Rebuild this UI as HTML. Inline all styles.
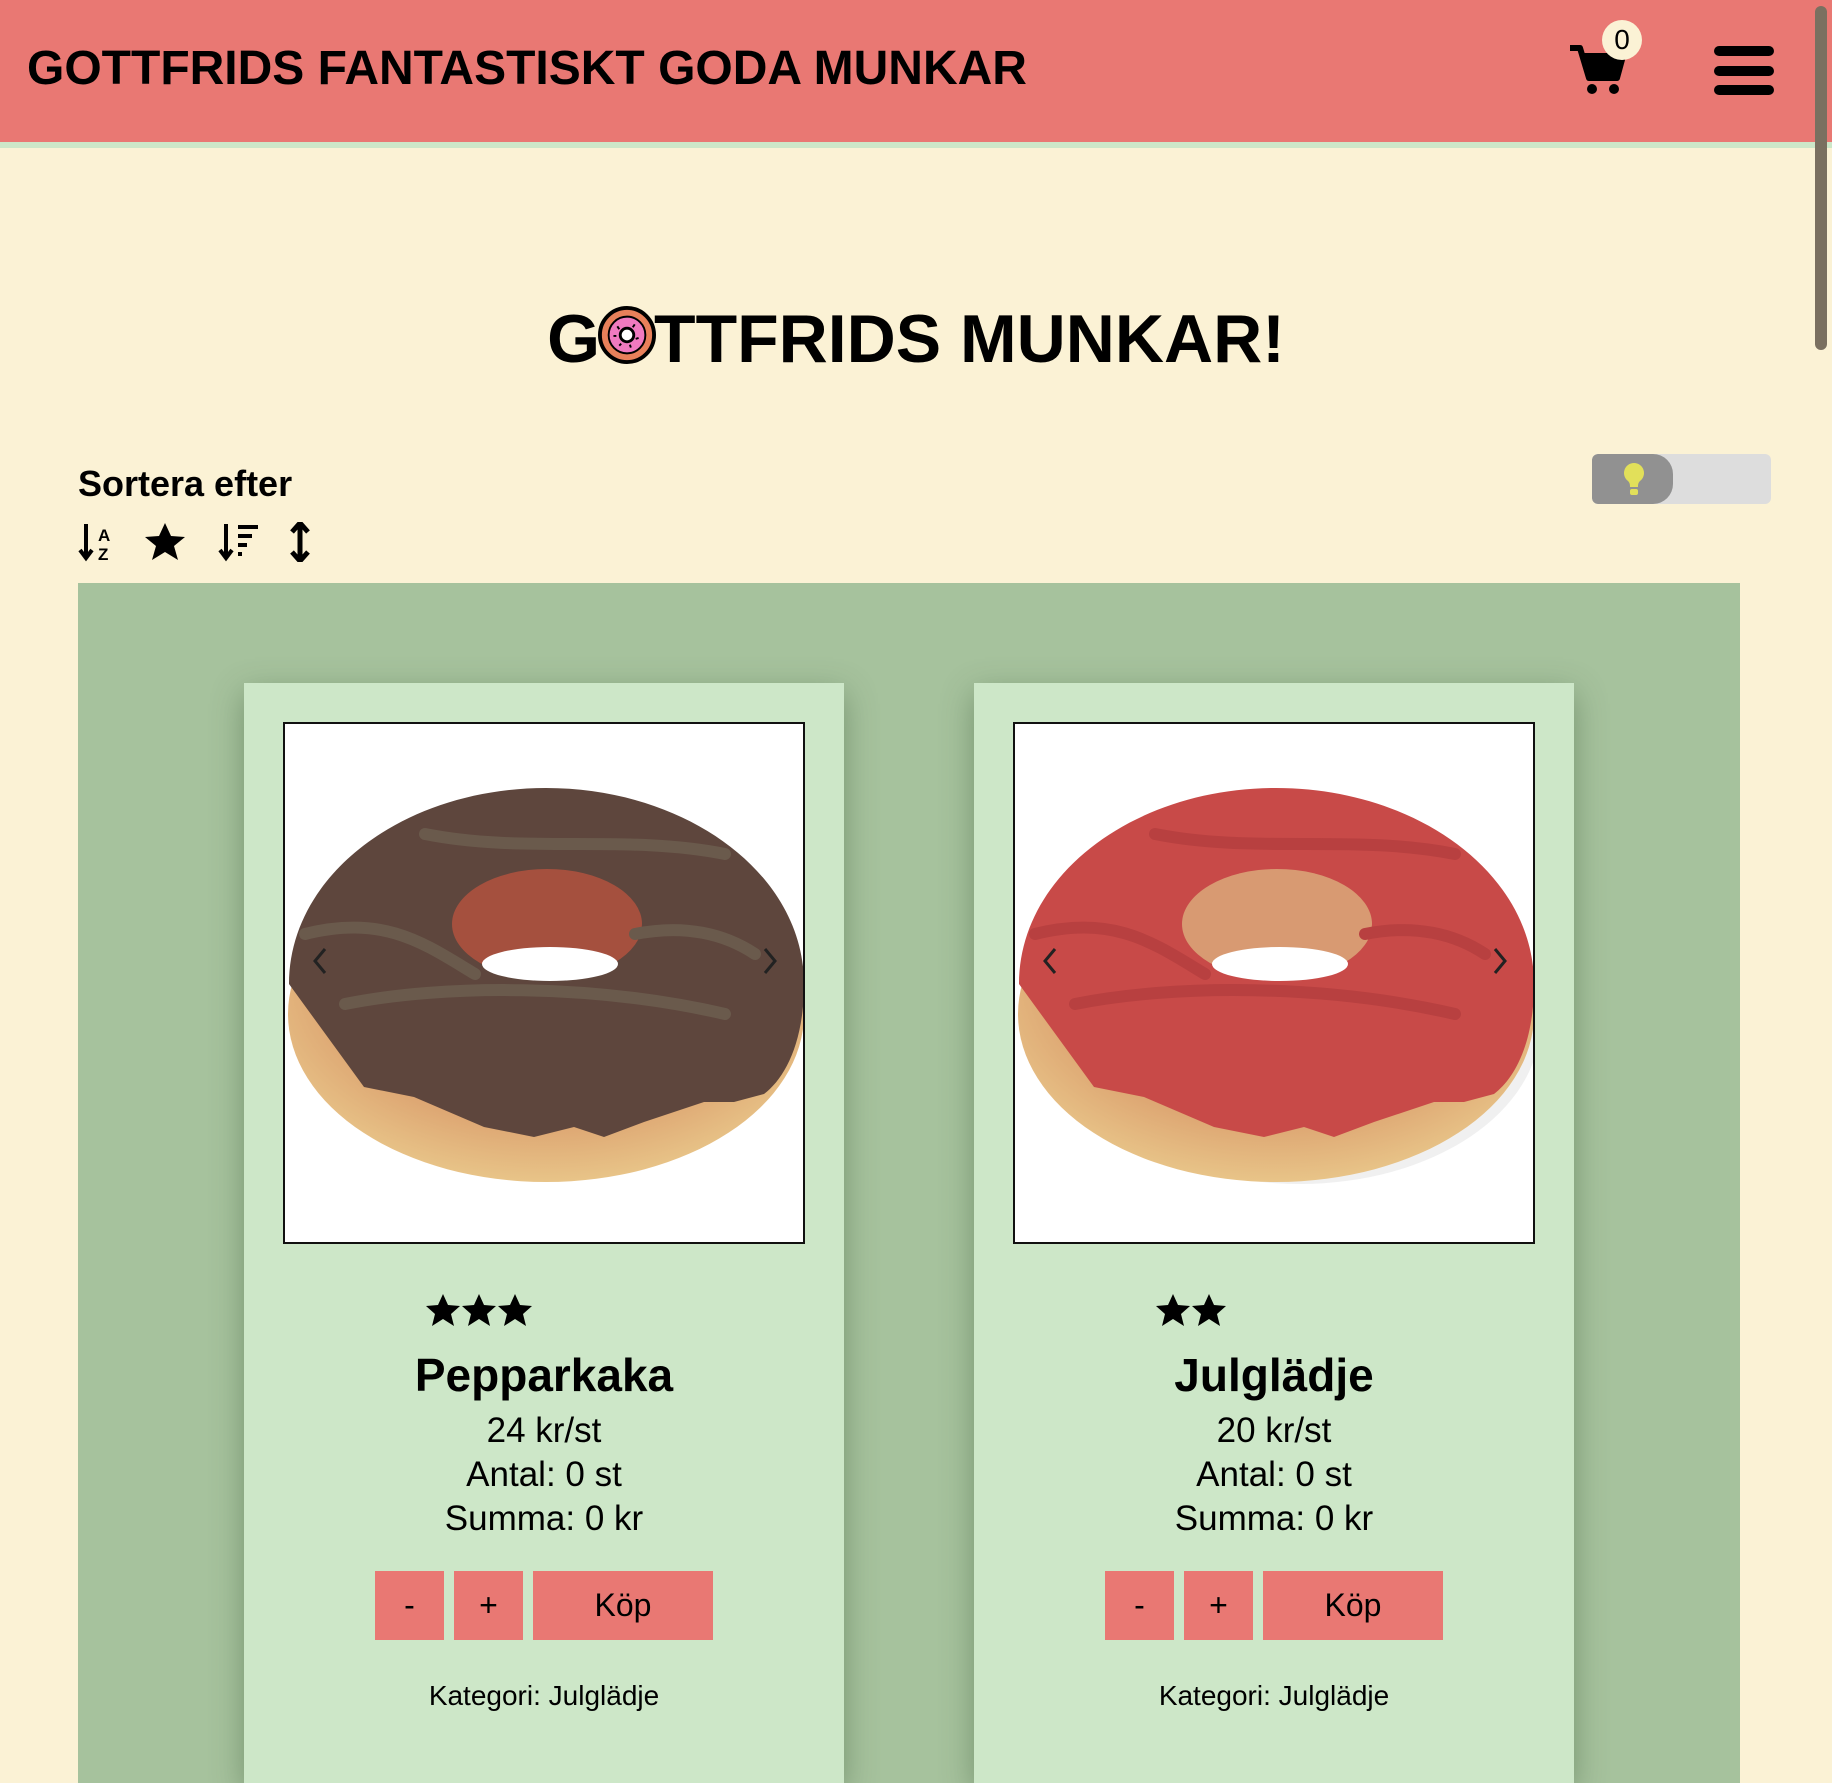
<!DOCTYPE html>
<html><head><meta charset="utf-8"><style>
*{margin:0;padding:0;box-sizing:border-box}
body{width:1832px;height:1702px;overflow:hidden;background:#fbf2d5;font-family:"Liberation Sans",Arial,sans-serif;color:#000;position:relative}
.hdr{position:absolute;left:0;top:0;width:1832px;height:142px;background:#e97873;border-bottom:6px solid #cde7c8;box-sizing:content-box}
.hdr h1{position:absolute;left:27px;top:41px;font-size:48px;font-weight:bold;letter-spacing:0px;white-space:nowrap}
.abs{position:absolute}
.title{position:absolute;left:0;width:1832px;top:300px;text-align:center;font-size:68px;font-weight:bold;white-space:nowrap}
.sect{position:absolute;left:78px;top:583px;width:1662px;height:1200px;background:#a6c29d}
.card{position:absolute;top:683px;width:600px;height:1100px;background:#cde7c8;box-shadow:0 10px 30px rgba(60,90,55,.45)}
.img{position:absolute;left:39px;top:39px;width:522px;height:522px;background:#fff;border:2px solid #111;overflow:hidden}
.stars{position:absolute;top:610px;left:182px}
.name{position:absolute;top:665px;width:600px;text-align:center;font-size:46px;font-weight:bold}
.info{position:absolute;top:726px;width:600px;text-align:center;font-size:35px;line-height:44px}
.btn{position:absolute;top:888px;height:69px;background:#e97873;font-size:32px;text-align:center;line-height:69px}
.kat{position:absolute;top:997px;width:600px;text-align:center;font-size:28px}
</style></head><body>
<div class="hdr"><h1>GOTTFRIDS FANTASTISKT GODA MUNKAR</h1>
<svg class="abs" style="left:1568px;top:44px" width="60" height="52" viewBox="0 0 60 52"><path d="M2 4h10l9 30h28l6-22H16" fill="none" stroke="#000" stroke-width="6" stroke-linejoin="round"/><path d="M16 12h39l-6 22H21z" fill="#000"/><circle cx="24" cy="45" r="5"/><circle cx="46" cy="45" r="5"/></svg>
<div class="abs" style="left:1602px;top:20px;width:40px;height:40px;border-radius:50%;background:#fbf2d5;text-align:center;line-height:40px;font-size:28px">0</div>
<div class="abs" style="left:1714px;top:46px;width:60px;height:10px;background:#000;border-radius:5px"></div>
<div class="abs" style="left:1714px;top:66px;width:60px;height:10px;background:#000;border-radius:5px"></div>
<div class="abs" style="left:1714px;top:85px;width:60px;height:10px;background:#000;border-radius:5px"></div>
</div>
<div class="abs" style="left:1815px;top:6px;width:12px;height:344px;background:#7a7060;border-radius:6px"></div>
<div class="title">G<svg width="58" height="62" viewBox="0 0 60 62" style="vertical-align:-4px;margin:0 -2px"><circle cx="30" cy="31" r="28" fill="#e8805a" stroke="#000" stroke-width="4"/><circle cx="30" cy="31" r="19" fill="#f07ac0" stroke="#000" stroke-width="2"/><circle cx="30" cy="31" r="7" fill="#fff" stroke="#000" stroke-width="3"/><path d="M20 22l2 3M38 20l-2 3M42 34l-3 1M22 42l2-2M34 44l-1-3M16 32h3" stroke="#000" stroke-width="2"/></svg>TTFRIDS MUNKAR!</div>
<div class="abs" style="left:78px;top:463px;font-size:36px;font-weight:bold">Sortera efter</div>
<svg class="abs" style="left:78px;top:522px" width="240" height="40" viewBox="0 0 240 40">
<path d="M8 2v32M2 28l6 8 6-8" stroke="#000" stroke-width="4" fill="none"/><text x="20" y="19" font-size="17" font-weight="bold" font-family="Liberation Sans">A</text><text x="20" y="38" font-size="17" font-weight="bold" font-family="Liberation Sans">Z</text>
<path d="M87 1l6 13 14 1-11 9 4 14-13-8-13 8 4-14-11-9 14-1z" fill="#000"/>
<path d="M148 2v32M142 28l6 8 6-8" stroke="#000" stroke-width="4" fill="none"/><path d="M160 5h20M160 14h14M160 23h9M160 32h4" stroke="#000" stroke-width="4"/>
<path d="M222 4v32M214 10l8-9 8 9M214 30l8 9 8-9" stroke="#000" stroke-width="5" fill="none"/>
</svg>
<div class="abs" style="left:1592px;top:454px;width:179px;height:50px;border-radius:6px;background:#ddd;overflow:hidden"><div style="width:81px;height:50px;background:#919191;border-radius:6px 20px 20px 6px"></div>
<svg class="abs" style="left:31px;top:8px" width="22" height="34" viewBox="0 0 22 34"><path d="M11 1a10 10 0 0 0-6 18c2 2 2 4 2 6h8c0-2 0-4 2-6A10 10 0 0 0 11 1z" fill="#e2e05a"/><rect x="7" y="27" width="8" height="6" rx="2" fill="#e2e05a"/></svg></div>
<div class="sect"></div>
<svg width="0" height="0" style="position:absolute"><defs>
<radialGradient id="dough" cx="0.5" cy="0.4" r="0.6"><stop offset="0.6" stop-color="#d99a6a"/><stop offset="1" stop-color="#e8c488"/></radialGradient>
<path id="st" d="M17 1l5 11 12 1-9 8 3 12-11-7-11 7 3-12-9-8 12-1z"/>
</defs></svg>
<div class="card" style="left:244px">
<div class="img"><svg width="522" height="522" viewBox="0 0 522 522">
<ellipse cx="261" cy="290" rx="258" ry="168" fill="url(#dough)"/>
<path d="M4 260C4 150 120 64 261 64s258 86 258 196c0 60-20 95-40 110l-30 8-30 0-60 20-40 15-30-10-40 10-50-10-70-30-50-10z" fill="#5e463d"/>
<ellipse cx="262" cy="200" rx="95" ry="55" fill="#a5503e"/>
<ellipse cx="265" cy="240" rx="68" ry="17" fill="#fff"/>
<path d="M60 280c100-20 250-20 380 10M20 210c80-20 120 10 170 40M140 110c100 20 200 0 300 20M350 210c50-10 90 0 120 20" stroke="#6a5a4c" stroke-width="12" fill="none" stroke-linecap="round"/>
<path d="M40 225l-10 12 10 12M480 225l10 12-10 12" stroke="#222" stroke-width="3" fill="none"/>
</svg></div>
<svg class="stars" width="110" height="36" viewBox="0 0 110 36"><use href="#st"/><use href="#st" x="36"/><use href="#st" x="72"/></svg>
<div class="name">Pepparkaka</div>
<div class="info">24 kr/st<br>Antal: 0 st<br>Summa: 0 kr</div>
<div class="btn" style="left:131px;width:69px">-</div><div class="btn" style="left:210px;width:69px">+</div><div class="btn" style="left:289px;width:180px">Köp</div>
<div class="kat">Kategori: Julglädje</div>
</div>
<div class="card" style="left:974px">
<div class="img"><svg width="522" height="522" viewBox="0 0 522 522">
<ellipse cx="285" cy="300" rx="240" ry="160" fill="#e6e6e6" opacity="0.6"/>
<ellipse cx="261" cy="290" rx="258" ry="168" fill="url(#dough)"/>
<path d="M4 260C4 150 120 64 261 64s258 86 258 196c0 60-20 95-40 110l-30 8-30 0-60 20-40 15-30-10-40 10-50-10-70-30-50-10z" fill="#c84a48"/>
<ellipse cx="262" cy="200" rx="95" ry="55" fill="#d89a72"/>
<ellipse cx="265" cy="240" rx="68" ry="17" fill="#fff"/>
<path d="M60 280c100-20 250-20 380 10M20 210c80-20 120 10 170 40M140 110c100 20 200 0 300 20M350 210c50-10 90 0 120 20" stroke="#b84040" stroke-width="12" fill="none" stroke-linecap="round"/>
<path d="M40 225l-10 12 10 12M480 225l10 12-10 12" stroke="#222" stroke-width="3" fill="none"/>
</svg></div>
<svg class="stars" width="110" height="36" viewBox="0 0 110 36"><use href="#st"/><use href="#st" x="36"/></svg>
<div class="name">Julglädje</div>
<div class="info">20 kr/st<br>Antal: 0 st<br>Summa: 0 kr</div>
<div class="btn" style="left:131px;width:69px">-</div><div class="btn" style="left:210px;width:69px">+</div><div class="btn" style="left:289px;width:180px">Köp</div>
<div class="kat">Kategori: Julglädje</div>
</div>
</body></html>
